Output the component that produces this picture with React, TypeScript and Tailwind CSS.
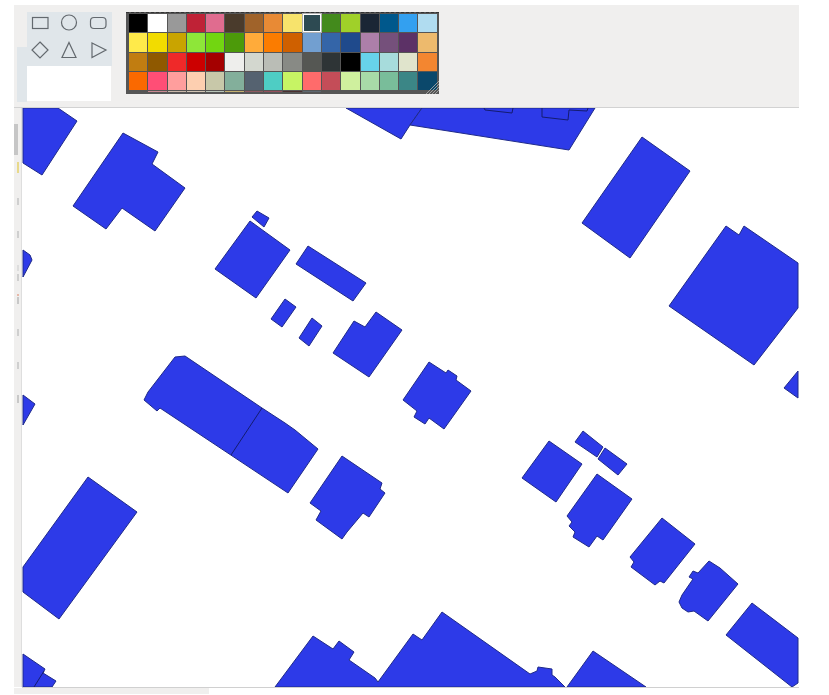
const palette = [
  ["#000000","#ffffff","#999999","#bf2236","#e06c8f","#4a3b2c","#a0632a","#e88a35","#f7e36c","#2d4a52","#438a1c","#a0d029","#1a2635","#00588c","#33a0f0","#b0dcf0"],
  ["#ffea4a","#f2dc00","#c9a400","#8ee639","#72d611","#4c9a0a","#ffab3a","#fb7c00","#cf6000","#729fd0","#3465a8","#1f4a8c","#ad7fa9","#75507b","#5c3166","#edba6d"],
  ["#c17d11","#8f5900","#ef2929","#cc0000","#a40000","#eeeeec","#d3d7cf","#babdb6","#888a85","#555753","#2e3436","#000000","#67d2ea","#a7dcdc","#e0e4cc","#f38630"],
  ["#fa6900","#ff4e76","#ff9e9d","#fdcfb0","#c8c8a9","#83af9b","#556270","#4ecdc4","#c7f464","#ff6b6b","#c44d58","#cff09e","#a8dba8","#79bd9a","#3b8686","#0b486b"],
  ["#555555","#c98a92","#c9b8aa","#d0c4b4","#b8c4b8","#c4b070","#8e5a60","#94505c","#4a3030","#5e6870","#555555","#555555","#555555","#555555","#555555","#555555"],
];

const buildings = [
  "23,108 58,108 77,121 42,175 23,163",
  "123,133 158,152 152,164 185,188 155,231 122,208 106,229 73,206",
  "23,250 30,255 32,260 23,277",
  "23,395 35,404 23,425",
  "175,357 185,356 262,408 285,423 295,430 318,449 288,493 160,408 157,411 144,400 148,392",
  "257,211 269,218 264,227 252,217",
  "250,221 290,250 256,298 215,269",
  "308,246 366,283 353,301 296,264",
  "285,299 296,307 282,327 271,319",
  "312,318 322,326 309,346 299,338",
  "354,321 365,327 376,312 402,330 369,377 333,353",
  "429,362 446,373 448,370 457,376 456,380 471,391 444,429 429,418 425,424 414,417 417,411 403,400",
  "549,441 582,464 556,502 522,478",
  "583,431 603,447 597,457 575,442",
  "605,448 627,464 618,475 598,459",
  "597,474 632,499 603,540 597,536 589,547 573,537 575,532 569,526 572,522 567,516",
  "662,518 695,544 664,583 660,581 655,585 631,567 634,562 630,557",
  "709,561 720,568 738,584 708,621 694,611 688,612 682,608 679,602 682,595 693,579 689,577 693,571 698,573",
  "752,603 798,638 798,683 792,687 726,635",
  "346,108 422,108 410,125 401,139",
  "422,108 595,108 569,150 410,125",
  "642,137 690,171 630,258 582,223",
  "726,226 739,235 744,226 798,263 798,308 754,365 669,306",
  "798,371 784,388 798,398",
  "342,456 382,483 380,489 385,493 369,517 363,513 347,532 342,539 316,520 321,511 310,503",
  "88,477 137,512 59,619 23,592 23,567",
  "23,654 45,669 43,673 56,681 52,687 23,687",
  "275,687 313,636 333,649 339,641 354,652 349,660 375,678 378,682 413,634 422,640 442,612 530,674 537,671 538,667 552,669 552,675 555,677 565,687",
  "567,687 593,651 646,687",
];

const lines = [
  "262,408 231,455",
  "44,671 34,687",
  "484,108 485,110 512,113 513,108",
  "542,108 542,117 568,120 569,110 587,111 588,108",
];

const marks = [
  { y: 162, h: 11, c: "#e8d98a" },
  { y: 198, h: 7, c: "#cfcfcf" },
  { y: 231, h: 7, c: "#cfcfcf" },
  { y: 265, h: 6, c: "#dddddd" },
  { y: 274, h: 7, c: "#cfcfcf" },
  { y: 294, h: 2, c: "#e8b8a8" },
  { y: 297, h: 7, c: "#c8c8c8" },
  { y: 329, h: 7, c: "#cfcfcf" },
  { y: 362, h: 7, c: "#cfcfcf" },
  { y: 395, h: 8, c: "#c8c8c8" },
];

export default function App() {
  return (
    <div className="w-[829px] h-[695px] bg-white pt-[5px] pl-[14px] overflow-hidden font-['Liberation_Sans',sans-serif]">
      <div className="w-[785px]">
        <div className="flex h-[103px] bg-[#f0efee] border-b border-[#d2d2d2]">
          <div className="w-[10px] h-[55px] mt-[42px] ml-[3px] bg-[#e0e6ea]" />
          <div className="w-[85px] mt-[7px] h-[89px] flex flex-col">
            <div className="h-[54px] bg-[#e0e6ea]">
              <svg width="85" height="54" viewBox="27 12 85 54" fill="none" stroke="#63696e" strokeWidth="1.2" className="blur-[0.3px]">
                <rect x="32.5" y="17.5" width="15.5" height="11" />
                <circle cx="69" cy="22.5" r="7.5" />
                <rect x="90.5" y="17.5" width="15.5" height="11" rx="3.5" />
                <path d="M40 42 L48 50 L40 58 L32 50 Z" />
                <path d="M69 42.5 L76 57.5 L62 57.5 Z" />
                <path d="M92 43 L106 50 L92 57.5 Z" />
              </svg>
            </div>
            <div className="h-[35px] w-[84px] bg-white" />
          </div>
          <div className="relative w-[313px] h-[82px] ml-[14px] mt-[7px] bg-[#555555] border-t border-dashed border-[#333333] overflow-hidden pt-[1px] pl-[3px]">
            <div className="grid grid-cols-[repeat(16,18.3px)] grid-rows-[repeat(4,18.3px)_1px] gap-[1px]">
              {palette.flat().map((c, i) => (
                <div
                  key={i}
                  className={i === 9 ? "border border-white outline outline-[1px] outline-[#b0b0b0]" : ""}
                  style={{ backgroundColor: c }}
                />
              ))}
            </div>
            <svg width="13" height="13" viewBox="0 0 13 13" stroke="#a8a8a8" strokeWidth="0.9" className="absolute right-0 bottom-0">
              <path d="M13 0 L0 13 M13 3 L3 13 M13 6 L6 13 M13 9 L9 13" />
            </svg>
          </div>
        </div>
        <div className="flex h-[579px]">
          <div className="relative w-[8px] bg-[#f0efee] border-r border-[#dedede]">
            <div className="w-[4px] h-[31px] mt-[16px] bg-[#c6c6c6]" />
            {marks.map((m, i) => (
              <div
                key={i}
                className="absolute left-[2.5px] w-[2px]"
                style={{ top: m.y - 108, height: m.h, backgroundColor: m.c }}
              />
            ))}
          </div>
          <svg width="777" height="579" viewBox="22 108 777 579" className="block bg-white blur-[0.35px]">
            {buildings.map((p, i) => (
              <polygon key={i} points={p} fill="#2d3ae8" stroke="#1f2a8a" strokeWidth="1" strokeLinejoin="round" />
            ))}
            {lines.map((p, i) => (
              <polyline key={i} points={p} fill="none" stroke="#141c70" strokeWidth="1" />
            ))}
          </svg>
        </div>
        <div className="h-[1px] ml-[8px] bg-[#d0d0d0]" />
        <div className="w-[195px] h-[6px] bg-[#f0efee]" />
      </div>
    </div>
  );
}
